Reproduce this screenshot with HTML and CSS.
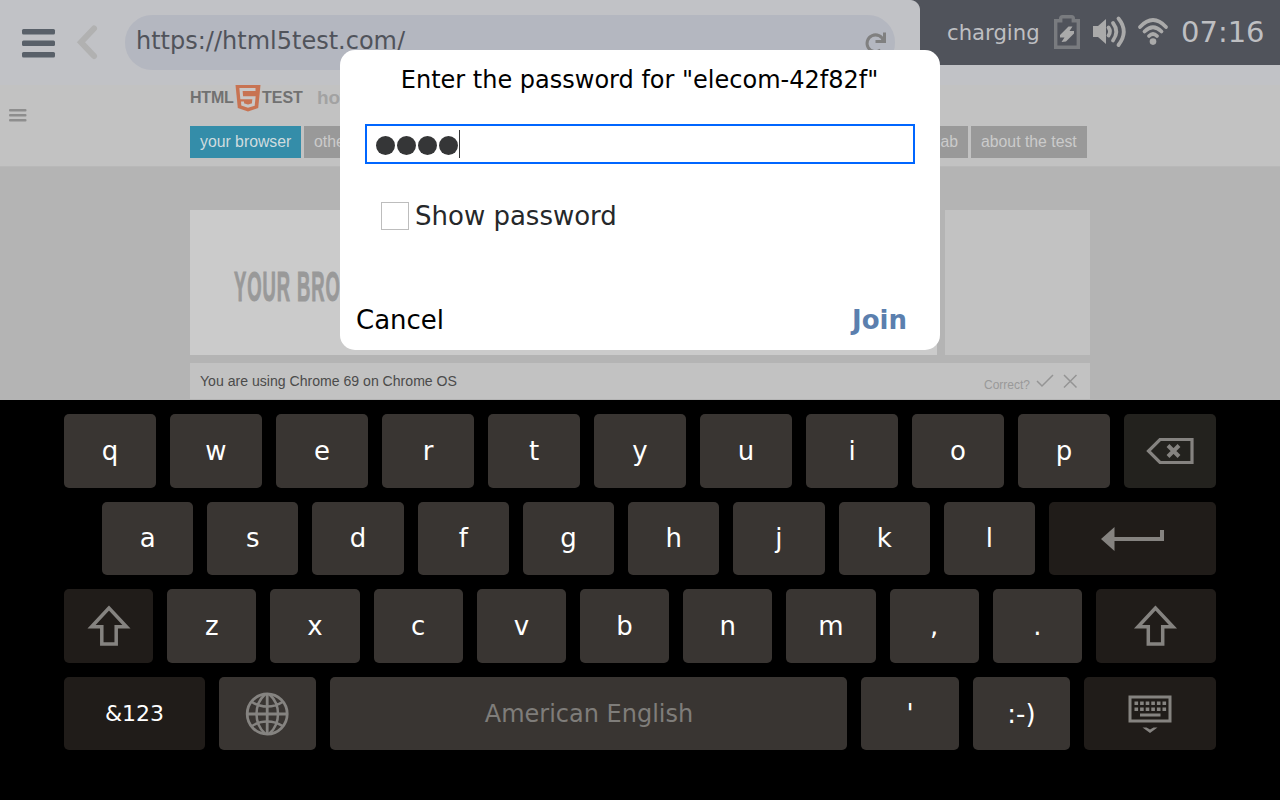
FILE: index.html
```html
<!DOCTYPE html>
<html lang="en">
<head>
<meta charset="utf-8">
<title>Enter password</title>
<link rel="stylesheet" href="styles.css">
</head>
<body>
<div class="screen">
  <div class="browser">
    <header class="topbar">
      <svg class="menu" width="34" height="30" viewBox="0 0 34 30" fill="#596069"><rect width="33" height="5.5" y="0" rx="1.5"/><rect width="33" height="5.5" y="11.5" rx="1.5"/><rect width="33" height="5.5" y="23" rx="1.5"/></svg>
      <svg class="back" width="22" height="36" viewBox="0 0 22 36" fill="none" stroke="#b1b1b1" stroke-width="6"><path d="M18 3.500 5 17.300 18 31" stroke-linecap="round"/></svg>
      <div class="address"><span>https://html5test.com/</span>
        <svg class="reload" width="24" height="24" viewBox="0 0 24 24"><path d="M16.500 19A8.400 8.400 0 1 1 19.500 10" fill="none" stroke="#808080" stroke-width="3"/><path d="M22 1.500v10.500H11.500V9h7.500V1.500z" fill="#808080"/></svg>
      </div>
      <div class="status">
        <span class="charging">charging</span>
        <svg class="battery" width="26" height="34" viewBox="0 0 26 34"><path d="M1.700 5.700h5V3.500Q6.700 1.700 8.500 1.700h9q1.800 0 1.800 1.800v2.200h5v26.600H1.700z" fill="none" stroke="#797b7f" stroke-width="3.400"/><path d="m14.500 11.500-8.500 8.500v2.500h4.500L7.500 27l4.500-.5 8-8V16h-4.500l3-4.500z" fill="#aaa"/></svg>
        <svg class="volume" width="34" height="30" viewBox="0 0 34 30"><path d="M0 9h5l8-7v25l-8-7H0z" fill="#aaa"/><g fill="none" stroke="#aaa" stroke-width="3.800" stroke-linecap="round"><path d="M15.500 10.500Q18.500 14.500 15.500 18.500M20 6Q26.500 14.500 20 23.500M25.500 1.500Q36 14.500 25.500 28"/></g></svg>
        <svg class="wifi" width="32" height="28" viewBox="0 0 32 28"><g fill="none" stroke="#aaa" stroke-width="3.800" stroke-linecap="round"><path d="M3 9Q16 -5 29 9M7.500 13.500Q16 5 24.500 13.500M12 18Q16 14 20 18"/></g><circle cx="16" cy="23.600" r="3.300" fill="#aaa"/></svg>
        <time class="clock">07:16</time>
      </div>
    </header>
    <div class="site-head">
      <svg class="site-menu" width="18" height="13" viewBox="0 0 18 13" fill="#8e8e8e"><rect width="17.500" height="2.500" rx="1"/><rect y="5" width="17.500" height="2.500" rx="1"/><rect y="10" width="17.500" height="2.500" rx="1"/></svg>
      <div class="logo"><b class="word">HTML</b>
        <svg width="26" height="27" viewBox="0 0 26 27"><path d="M.5 0h25l-2.300 23L13 26.500 2.800 23z" fill="#c87352"/><path d="M20.500 4.500H6l.7 8.200h12.300l-.7 6.800-5.300 1.700-5.300-1.700-.2-3" fill="none" stroke="#c9c7c6" stroke-width="3"/></svg>
        <b>TEST</b><b class="tagline">how</b></div>
      <nav class="tabs"><a class="tab active">your browser</a><a class="tab left">other browsers</a><a class="tab lab">device lab</a><a class="tab">about the test</a></nav>
    </div>
    <main class="site-body">
      <div class="cards"><section class="score"><h1>YOUR BRO</h1></section><section class="side"></section></div>
      <div class="agent"><span>You are using Chrome 69 on Chrome OS</span><span class="correct">Correct?</span>
        <svg width="42" height="16" viewBox="0 0 42 16" fill="none" stroke="#949494" stroke-width="1.500"><path d="m1 8 5 5L17 2M28 2l12.500 12.500M40.500 2 28 14.500"/></svg></div>
    </main>
  </div>
  <div class="keyboard">
    <div class="row row1"><b>q</b><b>w</b><b>e</b><b>r</b><b>t</b><b>y</b><b>u</b><b>i</b><b>o</b><b>p</b><b class="erase"><svg width="48" height="28" viewBox="0.500 0 48 28" fill="none" stroke="#858380" stroke-width="3.200"><path d="M14.500 2.500h32v23h-32L3 14z"/><path d="m22.500 8.500 11 11m0-11-11 11" stroke-width="4"/></svg></b></div>
    <div class="row row2"><b>a</b><b>s</b><b>d</b><b>f</b><b>g</b><b>h</b><b>j</b><b>k</b><b>l</b><b class="dark"><svg class="enter" width="64" height="24" viewBox="0 0 64 24" fill="#858380"><path d="M0 12 13.500 0v10H59V3h4v11H13.500v10z"/></svg></b></div>
    <div class="row row3"><b class="dark"><svg width="44" height="42" viewBox="0 0 44 42"><path d="M22 3 4.500 21.800h10.300V39h14.400V21.800h10.300z" fill="none" stroke="#858380" stroke-width="3.500"/></svg></b><b>z</b><b>x</b><b>c</b><b>v</b><b>b</b><b>n</b><b>m</b><b>,</b><b>.</b><b class="dark"><svg width="44" height="42" viewBox="0.500 0 44 42"><path d="M22 3 4.500 21.800h10.300V39h14.400V21.800h10.300z" fill="none" stroke="#858380" stroke-width="3.500"/></svg></b></div>
    <div class="row row4"><b class="dark symbols">&amp;123</b><b><svg width="44" height="44" viewBox="0.500 0 44 44" fill="none" stroke="#858380" stroke-width="2.800"><circle cx="21.700" cy="22" r="20"/><path d="M21.700 2v40M1.700 22h40"/><path d="M19.500 2.500Q11 10 11 22T19.500 41.500M24 2.500Q32.500 10 32.500 22T24 41.500M6.500 10Q13 14.500 21.700 14.500T37 10M6.500 34Q13 29.500 21.700 29.500T37 34" stroke-width="2.500"/></svg></b><b class="space">American English</b><b>'</b><b>:-)</b><b class="dark"><svg class="hide" width="44" height="38" viewBox="0 0 44 38"><path d="M2 2h40v24H2z" fill="none" stroke="#858380" stroke-width="3"/><path d="M6.500 8.200h32M6.500 14.200h32" stroke="#858380" stroke-width="3.600" stroke-dasharray="3.600 2"/><path d="M12 18.500h20.500v3H12zM14.500 32.500l7.500 5.500 7.500-5.500h-4l-3.500 2-3.500-2z" fill="#858380"/></svg></b></div>
  </div>
  <div class="dialog" role="dialog">
    <div class="title">Enter the password for "elecom-42f82f"</div>
    <div class="field"><i></i><i></i><i></i><i></i><span class="caret"></span></div>
    <label class="show"><span class="box"></span>Show password</label>
    <div class="actions"><span>Cancel</span><strong>Join</strong></div>
  </div>
</div>
</body>
</html>
```
FILE: styles.css
```css
* { box-sizing: border-box; }
body { margin: 0; font-family: "DejaVu Sans", sans-serif; }
.screen { position: relative; width: 1280px; height: 800px; overflow: hidden; background: #000; }
svg { display: block; flex: none; overflow: visible; }
.browser { height: 400px; overflow: hidden; background: #b4b4b4; }
.topbar { display: flex; height: 85px; background: #c1c2c6; }
.menu { margin: 29px 0 0 22px; }
.back { margin: 25px 0 0 20px; }
.address { display: flex; justify-content: space-between; width: 770px; height: 55px; margin: 15px 0 0 27px; padding: 0 7px 0 11px; border-radius: 27px; background: #b4b7c0; color: #50535b; font-size: 24px; line-height: 52px; }
.reload { margin-top: 16px; }
.status { display: flex; width: 385px; height: 65px; padding-left: 52px; background: radial-gradient(circle at 0 10px, #c1c2c6 9.5px, #50535b 10.5px) 15px 0 / 10px 10px no-repeat, linear-gradient(#c1c2c6, #c1c2c6) 0 0 / 15px 65px no-repeat, linear-gradient(#c1c2c6, #c1c2c6) 0 10px / 25px 55px no-repeat, #50535b; color: #bebfc2; }
.charging { width: 107px; font-size: 21.200px; line-height: 65px; }
.battery { margin-top: 15px; }
.volume { margin: 17px 0 0 13px; }
.wifi { margin: 18px 0 0 10px; }
.clock { margin-left: 12px; font-size: 29px; line-height: 64px; }
.site-head { position: relative; height: 82px; padding: 0 190px; background: #c2c2c2; border-bottom: 1px solid #b8b8b8; font-family: "Liberation Sans", Arial, sans-serif; }
.site-menu { position: absolute; left: 9px; top: 24px; }
.logo { display: flex; align-items: center; height: 26px; color: #717171; font-size: 16px; }
.word { width: 44px; letter-spacing: -.2px; }
.logo svg { margin: 0 1px; }
.tagline { margin-left: 14px; color: #a2a2a2; font-size: 19px; white-space: nowrap; }
.tabs { display: flex; gap: 3px; width: 897px; margin-top: 15px; }
.tab { height: 32px; padding: 0 10px; background: #999; color: #cbcbcb; font-size: 15.800px; line-height: 31px; white-space: nowrap; }
.active { width: 111px; background: #348da9; color: #d0dcdf; }
.left { width: 160px; }
.lab { margin-left: auto; }
.tab:last-child { width: 116px; }
.site-body { padding: 43px 190px 0; font-family: "Liberation Sans", Arial, sans-serif; }
.cards { display: flex; gap: 8px; height: 145px; }
.score { width: 747px; padding: 53px 44px; background: #cbcbcb; }
.score h1 { width: 226px; margin: 0; color: #999; font-size: 41px; line-height: 48px; letter-spacing: 2px; transform: scale(.45, 1.02); transform-origin: left; white-space: nowrap; -webkit-text-stroke: 1px #999; }
.side { width: 145px; background: #c2c2c2; }
.agent { display: flex; height: 36px; margin-top: 8px; padding: 0 12px 0 10px; background: #c2c2c2; color: #4b4b4b; font-size: 14.080px; line-height: 36px; }
.correct { margin: 4px 6px 0 auto; color: #999; font-size: 12px; }
.agent svg { margin: 10px 0 0; }
.keyboard { display: grid; grid-template-rows: repeat(4, 73.5px); gap: 14px; height: 400px; padding: 14px 64px; background: #000; }
.row { display: grid; gap: 14px; }
.row1 { grid-template-columns: repeat(11, 1fr); }
.row2 { grid-template-columns: repeat(9, 1fr) 167px; padding-left: 38px; }
.row3 { grid-template-columns: repeat(10, 1fr) 120px; }
.row4 { grid-template-columns: 141px 97px 517px 98px 97px 132px; }
.row > b { display: flex; align-items: center; justify-content: center; border-radius: 5px; background: #393532; color: #fff; font-size: 26px; font-weight: 400; }
.row > .dark { background: #201c19; }
.row > .erase { background: #23221e; }
.row > .symbols { padding-top: 1px; font-size: 22px; }
.row > .space { padding: 1px 0 0 1px; color: #7f7d7a; font-size: 24px; }
.row4 > b { padding-top: 1px; }
.enter { margin: 2px 0 0 2px; }
.hide { margin: 0; }
.dialog { position: absolute; left: 340px; top: 50px; width: 600px; height: 300px; padding: 14px 16px 0; border-radius: 15px; background: #fff; }
.title { height: 60px; padding-right: 1px; color: #000; font-size: 24px; line-height: 32px; text-align: center; white-space: nowrap; }
.field { display: flex; align-items: center; gap: 2px; width: 550px; height: 40px; margin-left: 9px; padding: 0 9px; border: 2px solid #06f; }
.field i { width: 19px; height: 19px; margin-top: 3px; border-radius: 50%; background: #353637; }
.caret { width: 1px; height: 28px; margin-left: -1px; background: #353637; }
.show { display: flex; align-items: center; gap: 6px; height: 28px; margin: 38px 0 0 25px; color: #26282a; font-size: 26px; }
.box { width: 28px; height: 28px; border: 1px solid #bdbdbd; }
.actions { display: flex; justify-content: space-between; margin-top: 74px; padding-right: 17px; font-size: 26px; line-height: 32px; }
.actions strong { color: #5b7fae; }
```
